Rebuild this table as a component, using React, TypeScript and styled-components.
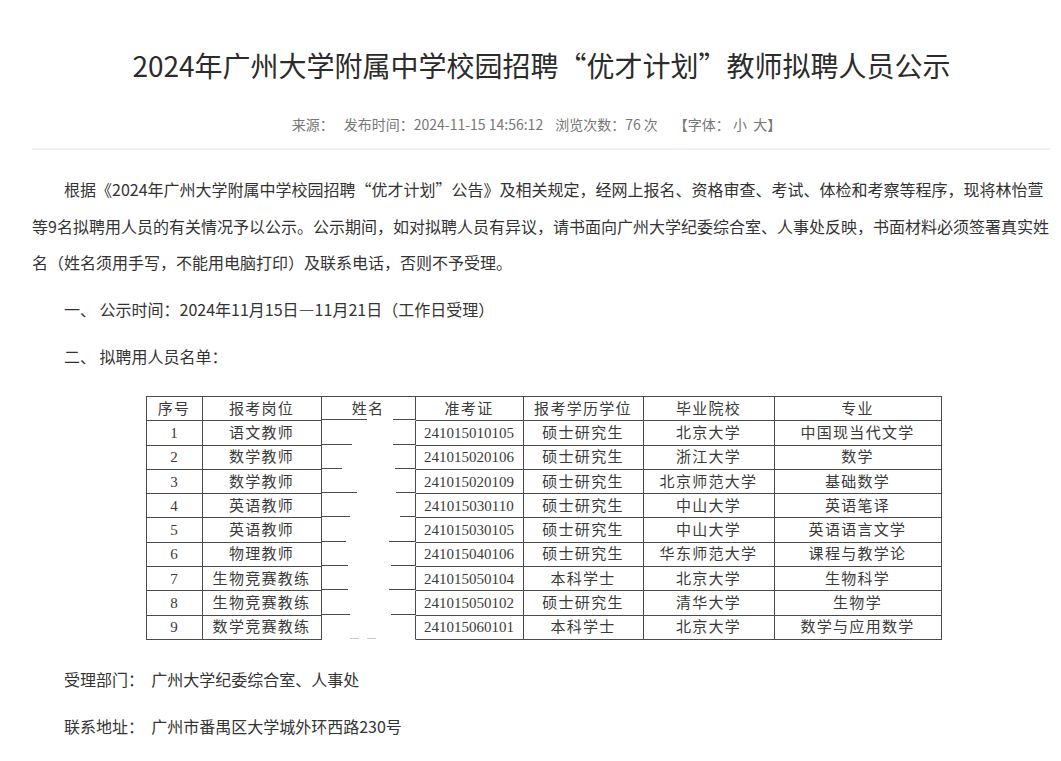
import React from "react";
import styled, { createGlobalStyle } from "styled-components";

const Global = createGlobalStyle`
  html, body { margin: 0; padding: 0; background: #ffffff; }
  body { font-family: "Noto Sans CJK SC", "Noto Sans", sans-serif; color: #333; }
`;

const Page = styled.div`
  width: 1061px;
  min-height: 761px;
  box-sizing: border-box;
  background: #fff;
  overflow: hidden;
`;

const Header = styled.header`
  padding: 45px 0 0 22px;
  text-align: center;
`;

const Title = styled.h1`
  margin: 0;
  font-size: 28px;
  line-height: 40px;
  font-weight: 400;
  color: #2b2b2b;
`;

const Meta = styled.div`
  margin-top: 29px;
  font-size: 14px;
  line-height: 20px;
  color: #777;
  display: flex;
  justify-content: center;
  padding-right: 10px;
`;

const MetaItem = styled.span<{ $gap?: number }>`
  margin-left: ${(p) => p.$gap ?? 0}px;
  white-space: pre;
`;

const Divider = styled.hr`
  margin: 14px 11px 0 32px;
  border: 0;
  height: 2px;
  background: #f0f0f0;
`;

const Article = styled.article`
  padding: 21px 10px 0 32px;
  display: flex;
  flex-direction: column;
  gap: 10.5px;
  font-size: 16px;
  line-height: 36.5px;
  color: #333;
`;

const Para = styled.p<{ $indent?: boolean }>`
  margin: 0;
  text-indent: ${(p) => (p.$indent ? "2em" : "0")};
`;

const Item = styled.p`
  margin: 0;
  padding-left: 32px;
  white-space: pre;
`;

const TableWrap = styled.div`
  display: flex;
  justify-content: center;
  margin: 11px 0 10.5px;
  padding-left: 4px;
`;

const Table = styled.table`
  border-collapse: separate;
  border-spacing: 0;
  table-layout: fixed;
  width: 795px;
  border-top: 1px solid #4a4a4a;
  border-left: 1px solid #4a4a4a;
  font-family: "Liberation Serif", "Noto Sans CJK SC", serif;
  font-size: 15px;
  color: #3a3a3a;
`;

const Row = styled.tr`
  height: 24.3px;
`;

const Cell = styled.td<{ $num?: boolean; $width?: number }>`
  box-sizing: border-box;
  border-right: 1px solid #4a4a4a;
  border-bottom: 1px solid #4a4a4a;
  padding: 0;
  text-align: center;
  line-height: 22px;
  letter-spacing: ${(p) => (p.$num ? "0" : "1.3px")};
  width: ${(p) => (p.$width ? `${p.$width}px` : "auto")};
  white-space: nowrap;
  overflow: hidden;
`;

const HeadCell = styled(Cell).attrs({ as: "th" })<{ $blurred?: boolean }>`
  font-weight: 400;
  ${(p) =>
    p.$blurred
      ? `
    border-bottom-color: transparent;
    background: linear-gradient(to right, #4a4a4a 0 48%, transparent 48% 76%, #4a4a4a 76%) bottom / 100% 1px no-repeat;
  `
      : ""}
`;

const NameCell = styled.td<{ $last?: boolean; $left: number; $right: number }>`
  box-sizing: border-box;
  border-right: 1px solid #4a4a4a;
  border-bottom: 1px solid transparent;
  padding: 0;
  background: ${(p) =>
      p.$last
        ? "linear-gradient(to right, transparent 0 30%, #c8c8c8 30% 40%, transparent 40% 48%, #c8c8c8 48% 58%, transparent 58%)"
        : `linear-gradient(to right, #4a4a4a 0 ${p.$left}%, transparent ${p.$left}% ${p.$right}%, #4a4a4a ${p.$right}% 100%)`}
    bottom / 100% 1px no-repeat;
`;

const Footer = styled.div`
  display: flex;
  flex-direction: column;
  gap: 10.5px;
`;

const cols = [
  { key: "序号", w: 56 },
  { key: "报考岗位", w: 119 },
  { key: "姓名", w: 94, blurred: true },
  { key: "准考证", w: 108 },
  { key: "报考学历学位", w: 120 },
  { key: "毕业院校", w: 131 },
  { key: "专业", w: 167 },
];

const rows = [
  ["1", "语文教师", "241015010105", "硕士研究生", "北京大学", "中国现当代文学"],
  ["2", "数学教师", "241015020106", "硕士研究生", "浙江大学", "数学"],
  ["3", "数学教师", "241015020109", "硕士研究生", "北京师范大学", "基础数学"],
  ["4", "英语教师", "241015030110", "硕士研究生", "中山大学", "英语笔译"],
  ["5", "英语教师", "241015030105", "硕士研究生", "中山大学", "英语语言文学"],
  ["6", "物理教师", "241015040106", "硕士研究生", "华东师范大学", "课程与教学论"],
  ["7", "生物竞赛教练", "241015050104", "本科学士", "北京大学", "生物科学"],
  ["8", "生物竞赛教练", "241015050102", "硕士研究生", "清华大学", "生物学"],
  ["9", "数学竞赛教练", "241015060101", "本科学士", "北京大学", "数学与应用数学"],
];

/* where the redaction blur breaks each row line in the name column (percent of width) */
const gaps: [number, number][] = [
  [32, 76],
  [22, 78],
  [38, 80],
  [30, 84],
  [26, 72],
  [28, 74],
  [28, 72],
  [30, 74],
  [0, 100],
];

export default function App() {
  return (
    <Page lang="zh-CN">
      <Global />
      <Header>
        <Title>2024年广州大学附属中学校园招聘“优才计划”教师拟聘人员公示</Title>
        <Meta>
          <MetaItem>来源：</MetaItem>
          <MetaItem $gap={10}>发布时间：2024-11-15 14:56:12</MetaItem>
          <MetaItem $gap={12}>浏览次数：76 次</MetaItem>
          <MetaItem $gap={16}>{"【字体： 小  大】"}</MetaItem>
        </Meta>
      </Header>
      <Divider />
      <Article>
        <Para $indent>
          根据《2024年广州大学附属中学校园招聘“优才计划”公告》及相关规定，经网上报名、资格审查、考试、体检和考察等程序，现将林怡萱等9名拟聘用人员的有关情况予以公示。公示期间，如对拟聘人员有异议，请书面向广州大学纪委综合室、人事处反映，书面材料必须签署真实姓名（姓名须用手写，不能用电脑打印）及联系电话，否则不予受理。
        </Para>
        <Item>一、 公示时间：2024年11月15日—11月21日（工作日受理）</Item>
        <Item>二、 拟聘用人员名单：</Item>
        <TableWrap>
          <Table>
            <thead>
              <Row>
                {cols.map((c) => (
                  <HeadCell key={c.key} $width={c.w} $blurred={c.blurred}>
                    {c.key}
                  </HeadCell>
                ))}
              </Row>
            </thead>
            <tbody>
              {rows.map((r, i) => (
                <Row key={r[0]}>
                  <Cell $num>{r[0]}</Cell>
                  <Cell>{r[1]}</Cell>
                  <NameCell
                    $last={i === rows.length - 1}
                    $left={gaps[i][0]}
                    $right={gaps[i][1]}
                  />
                  <Cell $num>{r[2]}</Cell>
                  <Cell>{r[3]}</Cell>
                  <Cell>{r[4]}</Cell>
                  <Cell>{r[5]}</Cell>
                </Row>
              ))}
            </tbody>
          </Table>
        </TableWrap>
        <Footer>
          <Item>受理部门：  广州大学纪委综合室、人事处</Item>
          <Item>联系地址：  广州市番禺区大学城外环西路230号</Item>
        </Footer>
      </Article>
    </Page>
  );
}
